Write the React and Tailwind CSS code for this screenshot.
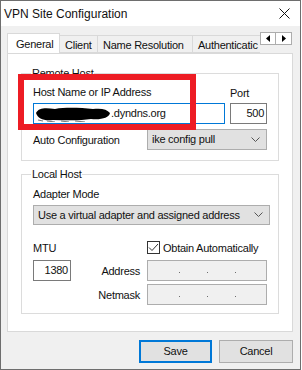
const font = { fontFamily: '"Liberation Sans", Arial, sans-serif' };

const GroupBox = ({ title, className, children }) => (
  <div className={`relative border border-[#dcdcdc] mx-[13px] ${className}`}>
    <span className="absolute left-[9px] -top-[8px] bg-white px-px leading-[14px] text-[11px]">{title}</span>
    {children}
  </div>
);

const Combo = ({ value, className }) => (
  <div className={`flex items-center justify-between bg-[#e1e1e1] border border-[#adadad] pl-[4px] pr-[6px] ${className}`}>
    <span className="text-[11px] leading-none">{value}</span>
    <svg width="9" height="6" viewBox="0 0 9 6" className="text-[#555]">
      <path d="M0.5 0.5 L4.5 4.5 L8.5 0.5" fill="none" stroke="currentColor" strokeWidth="1" />
    </svg>
  </div>
);

const IpBox = () => (
  <div className="relative w-[120px] h-[21px] bg-[#f0f0f0] border border-[#adadad]">
    <span className="absolute left-[31px] top-[11px] w-px h-px bg-[#6d6d6d]" />
    <span className="absolute left-[59px] top-[11px] w-px h-px bg-[#6d6d6d]" />
    <span className="absolute left-[87px] top-[11px] w-px h-px bg-[#6d6d6d]" />
  </div>
);

const Tab = ({ label, active, className = '' }) =>
  active ? (
    <div className={`relative z-10 h-[21px] -mb-px bg-white border border-b-0 border-[#d9d9d9] flex items-start pt-[3px] ${className}`}>
      <span className="text-[11px] leading-[14px]">{label}</span>
    </div>
  ) : (
    <div className={`h-[18px] bg-[#f0f0f0] border border-[#d9d9d9] border-l-0 flex items-start pt-[2px] pl-[5px] shrink-0 ${className}`}>
      <span className="text-[11px] leading-[14px] whitespace-nowrap">{label}</span>
    </div>
  );

export default function App() {
  return (
    <div className="w-[302px] h-[370px] bg-white" style={font}>
      <div className="w-[301px] h-[370px] flex flex-col border border-[#6e6e6e] text-[#111]">
        <div className="h-[25px] bg-white flex items-center justify-between pl-[3px] pr-[10px] shrink-0">
          <span className="text-[12px] leading-none mt-[1px]">VPN Site Configuration</span>
          <svg width="11" height="11" viewBox="0 0 11 11">
            <path d="M0.5 0.5 L10.5 10.5 M10.5 0.5 L0.5 10.5" stroke="#111" strokeWidth="1" />
          </svg>
        </div>

        <div className="flex-1 bg-[#f0f0f0] flex flex-col pl-[6px] pr-[8px] pt-[7px] tracking-[-0.25px]">
          <div className="flex items-end h-[20px]">
            <div className="flex items-end w-[254px] overflow-hidden">
              <Tab label="General" active className="w-[53px] pl-[8px] shrink-0" />
              <Tab label="Client" className="w-[38px]" />
              <Tab label="Name Resolution" className="w-[95px]" />
              <Tab label="Authenticatic" className="w-[80px]" />
            </div>
            <div className="self-start -mt-[1px] flex">
              <div className="w-[16px] h-[13px] bg-white border border-[#adadad] flex items-center justify-center">
                <svg width="4" height="7" viewBox="0 0 4 7"><path d="M4 0 L0 3.5 L4 7 Z" fill="#000" /></svg>
              </div>
              <div className="w-[16px] h-[13px] bg-white border border-l-0 border-[#adadad] flex items-center justify-center">
                <svg width="4" height="7" viewBox="0 0 4 7"><path d="M0 0 L4 3.5 L0 7 Z" fill="#000" /></svg>
              </div>
            </div>
          </div>

          <div className="relative w-[286px] h-[279px] bg-white border border-[#d9d9d9] pt-[19px]">
            <GroupBox title="Remote Host" className="h-[88px] pt-[11px] px-[11px]">
              <div className="flex justify-between text-[11px] leading-[14px]">
                <span>Host Name or IP Address</span>
                <span className="w-[37px] mt-[1px]">Port</span>
              </div>
              <div className="flex justify-between mt-[3px]">
                <div className="w-[192px] h-[21px] border border-[#0078d7] flex items-center pl-[1px]">
                  <svg width="77" height="17" viewBox="0 0 77 17" className="shrink-0">
                    <path d="M1 8 C4 2 12 3 20 4 C32 2 46 3 58 4 C66 3 72 4 75 8 C74 13 66 15 56 14 C44 16 30 15 18 15 C9 16 3 14 1 8 Z" fill="#000" />
                    <path d="M3 15 L8 16 M12 16 L20 17 M26 16 L34 17 M40 16 L50 17" stroke="#777" strokeWidth="1" />
                  </svg>
                  <span className="text-[11px] leading-none -ml-[1px]">.dyndns.org</span>
                </div>
                <div className="w-[37px] h-[21px] border border-[#7a7a7a] flex items-center justify-end pr-[2px]">
                  <span className="text-[11px] leading-none">500</span>
                </div>
              </div>
              <div className="flex items-center justify-between mt-[5px]">
                <span className="text-[11px] leading-[14px]">Auto Configuration</span>
                <Combo value="ike config pull" className="w-[120px] h-[21px]" />
              </div>
            </GroupBox>

            <GroupBox title="Local Host" className="h-[140px] mt-[13px] pt-[12px] px-[11px]">
              <div className="text-[11px] leading-[14px]">Adapter Mode</div>
              <Combo value="Use a virtual adapter and assigned address" className="w-[237px] h-[20px] mt-[4px]" />
              <div className="flex items-center justify-between mt-[15px]">
                <span className="text-[11px] leading-[14px] mt-[1px]">MTU</span>
                <div className="flex items-center w-[120px] gap-[3px]">
                  <div className="w-[13px] h-[13px] border border-[#333] bg-white flex items-center justify-center">
                    <svg width="11" height="9" viewBox="0 0 11 9">
                      <path d="M1 4.5 L4 7.5 L10 1" fill="none" stroke="#333" strokeWidth="1" />
                    </svg>
                  </div>
                  <span className="text-[11px] leading-[14px]">Obtain Automatically</span>
                </div>
              </div>
              <div className="flex justify-between mt-[5px]">
                <div className="w-[38px] h-[21px] border border-[#7a7a7a] flex items-center justify-end pr-[2px]">
                  <span className="text-[11px] leading-none">1380</span>
                </div>
                <div className="flex flex-col gap-[3px]">
                  <div className="flex items-center gap-[7px]">
                    <span className="w-[60px] text-right text-[11px] leading-[14px]">Address</span>
                    <IpBox />
                  </div>
                  <div className="flex items-center gap-[7px]">
                    <span className="w-[60px] text-right text-[11px] leading-[14px]">Netmask</span>
                    <IpBox />
                  </div>
                </div>
              </div>
            </GroupBox>

            <div className="absolute left-[10px] top-[20px] w-[178px] h-[56px] border-[6px] border-[#ed1c24]" />
          </div>

          <div className="flex justify-end gap-[7px] mt-[8px] -mr-[1px]">
            <button className="w-[73px] h-[23px] bg-[#e1e1e1] border-2 border-[#0078d7] text-[11px] leading-none">Save</button>
            <button className="w-[74px] h-[23px] bg-[#e1e1e1] border border-[#adadad] text-[11px] leading-none">Cancel</button>
          </div>
        </div>
      </div>
    </div>
  );
}
